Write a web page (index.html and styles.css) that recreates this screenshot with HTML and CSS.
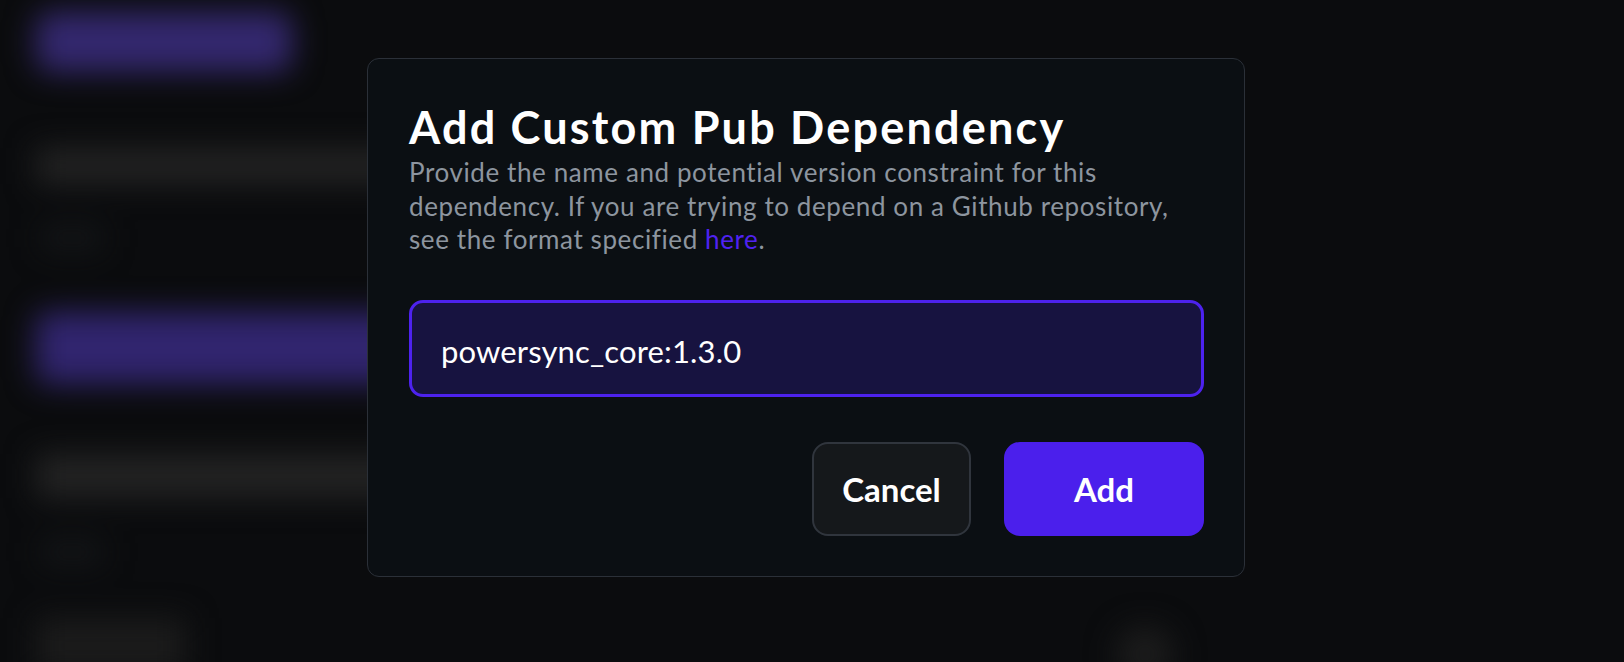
FILE: index.html
```html
<!DOCTYPE html>
<html lang="en">
<head>
<meta charset="utf-8">
<title>Add Custom Pub Dependency</title>
<link rel="stylesheet" href="styles.css">
</head>
<body>
  <div class="backdrop-page" aria-hidden="true">
    <div class="bg-button"></div>
    <div class="bg-label"></div>
    <div class="bg-hint"></div>
    <div class="bg-field"></div>
    <div class="bg-label bg-label-2"></div>
    <div class="bg-hint"></div>
    <div class="bg-footer">
      <div class="bg-chip"></div>
      <div class="bg-dot"></div>
    </div>
  </div>

  <div class="overlay">
    <div class="dialog" role="dialog" aria-labelledby="dlg-title">
      <h1 id="dlg-title" class="dialog-title">Add Custom Pub Dependency</h1>
      <p class="dialog-desc">Provide the name and potential version constraint for this dependency. If you are trying to depend on a Github repository, see the format specified <a href="#" class="link">here</a>.</p>
      <div class="field">powersync_core:1.3.0</div>
      <div class="actions">
        <button class="btn btn-cancel">Cancel</button>
        <button class="btn btn-add">Add</button>
      </div>
    </div>
  </div>
</body>
</html>
```

FILE: styles.css
```css
* { box-sizing: border-box; }

html, body {
  margin: 0;
  padding: 0;
  width: 1624px;
  height: 662px;
  overflow: hidden;
  background: #0b0c0e;
  font-family: "Lato", "Roboto", sans-serif;
}

/* blurred page behind the dialog */
.backdrop-page {
  display: flex;
  flex-direction: column;
  padding: 12px 0 0 36px;
  filter: blur(15px);
  height: 662px;
}

.backdrop-page > * { flex-shrink: 0; }

.bg-button {
  width: 256px;
  height: 60px;
  border-radius: 14px;
  background: #34286f;
}

.bg-label {
  margin-top: 76px;
  width: 560px;
  height: 36px;
  background: #232323;
}

.bg-hint {
  margin-top: 42px;
  margin-left: 6px;
  width: 60px;
  height: 24px;
  background: #141618;
}

.bg-field {
  margin-top: 62px;
  width: 600px;
  height: 72px;
  border-radius: 10px;
  background: #31256f;
}

.bg-label-2 {
  margin-top: 70px;
  height: 44px;
}

.bg-footer {
  margin-top: 54px;
  display: flex;
  align-items: flex-start;
  gap: 930px;
}

.bg-chip {
  width: 150px;
  height: 56px;
  background: #1b1b1b;
}

.bg-dot {
  margin-top: 8px;
  width: 58px;
  height: 56px;
  border-radius: 50%;
  background: #1c1c1c;
}

/* dialog */
.overlay {
  position: absolute;
  inset: 0;
  padding: 58px 0 0 367px;
}

.dialog {
  width: 878px;
  height: 519px;
  background: #0b0f13;
  border: 1px solid #2b3038;
  border-radius: 12px;
  padding: 41px 40px 40px 41px;
  display: flex;
  flex-direction: column;
}

.dialog-title {
  margin: 0;
  font-size: 45px;
  line-height: 54px;
  font-weight: 700;
  color: #ffffff;
  letter-spacing: 2.2px;
}

.dialog-desc {
  margin: 2px 0 0 0;
  font-size: 26px;
  line-height: 33.5px;
  font-weight: 400;
  color: #8d959f;
  letter-spacing: 0.6px;
}

.link {
  color: #4f22f0;
  text-decoration: none;
}

.field {
  margin-top: 43px;
  height: 97px;
  border: 3px solid #4d22ee;
  border-radius: 14px;
  background: #171340;
  color: #ffffff;
  font-size: 31px;
  line-height: 36px;
  letter-spacing: 0.15px;
  padding: 30px 30px 0 29px;
}

.actions {
  margin-top: 45px;
  display: flex;
  justify-content: flex-end;
  gap: 33px;
}

.btn {
  height: 94px;
  border-radius: 16px;
  font-family: inherit;
  font-size: 33px;
  font-weight: 700;
  color: #ffffff;
  padding: 0;
  cursor: pointer;
}

.btn-cancel {
  width: 159px;
  background: #15181b;
  border: 2px solid #30353d;
}

.btn-add {
  width: 200px;
  background: #4b1fec;
  border: none;
}
```
